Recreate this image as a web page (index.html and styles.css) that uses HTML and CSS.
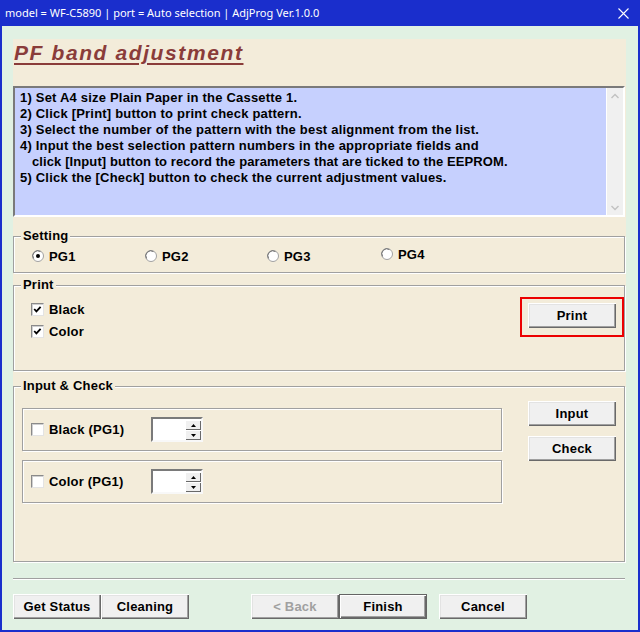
FILE: index.html
```html
<!DOCTYPE html>
<html lang="en">
<head>
<meta charset="utf-8">
<title>PF band adjustment</title>
<link rel="stylesheet" href="styles.css">
</head>
<body>
<div class="window">
  <div class="titlebar">
    <span class="title">model = WF-C5890 | port = Auto selection | AdjProg Ver.1.0.0</span>
    <svg class="close" width="11" height="11" viewBox="0 0 11 11"><path d="M0.5 0.5 L10.5 10.5 M10.5 0.5 L0.5 10.5" stroke="#fff" stroke-width="1.1" fill="none"/></svg>
  </div>
  <div class="client">
    <div class="panel">
      <h1 class="heading">PF band adjustment</h1>
      <div class="textbox">
        <div class="instructions"><div>1) Set A4 size Plain Paper in the Cassette 1.</div><div>2) Click [Print] button to print check pattern.</div><div>3) Select the number of the pattern with the best alignment from the list.</div><div>4) Input the best selection pattern numbers in the appropriate fields and</div><div class="indent">click [Input] button to record the parameters that are ticked to the EEPROM.</div><div>5) Click the [Check] button to check the current adjustment values.</div></div>
        <div class="vscroll">
          <svg width="8" height="6" viewBox="0 0 8 6"><path d="M0.5 5 L4 1.5 L7.5 5" stroke="#c2c2c2" stroke-width="1.4" fill="none"/></svg>
          <svg width="8" height="6" viewBox="0 0 8 6"><path d="M0.5 1 L4 4.5 L7.5 1" stroke="#c2c2c2" stroke-width="1.4" fill="none"/></svg>
        </div>
      </div>

      <fieldset class="group setting">
        <legend>Setting</legend>
        <div class="radios">
          <label class="radio r1"><svg width="12" height="12" viewBox="0 0 12 12"><circle cx="6" cy="6" r="5.5" fill="#fff" stroke="#a0a0a0"/><path d="M1.6 8.5 A5 5 0 0 1 8.5 1.6" stroke="#707070" fill="none"/><circle cx="6" cy="6" r="2" fill="#000"/></svg>PG1</label>
          <label class="radio r2"><svg width="12" height="12" viewBox="0 0 12 12"><circle cx="6" cy="6" r="5.5" fill="#fff" stroke="#a0a0a0"/><path d="M1.6 8.5 A5 5 0 0 1 8.5 1.6" stroke="#707070" fill="none"/></svg>PG2</label>
          <label class="radio r3"><svg width="12" height="12" viewBox="0 0 12 12"><circle cx="6" cy="6" r="5.5" fill="#fff" stroke="#a0a0a0"/><path d="M1.6 8.5 A5 5 0 0 1 8.5 1.6" stroke="#707070" fill="none"/></svg>PG3</label>
          <label class="radio r4"><svg width="12" height="12" viewBox="0 0 12 12"><circle cx="6" cy="6" r="5.5" fill="#fff" stroke="#a0a0a0"/><path d="M1.6 8.5 A5 5 0 0 1 8.5 1.6" stroke="#707070" fill="none"/></svg>PG4</label>
        </div>
      </fieldset>

      <fieldset class="group print">
        <legend>Print</legend>
        <div class="print-body">
          <div class="checks">
            <label class="check"><span class="cb"><svg width="11" height="11" viewBox="0 0 11 11"><path d="M2.2 5 L4.4 7.4 L8.6 2.8" stroke="#000" stroke-width="1.8" fill="none"/></svg></span>Black</label>
            <label class="check"><span class="cb"><svg width="11" height="11" viewBox="0 0 11 11"><path d="M2.2 5 L4.4 7.4 L8.6 2.8" stroke="#000" stroke-width="1.8" fill="none"/></svg></span>Color</label>
          </div>
          <div class="highlight"><button class="btn">Print</button></div>
        </div>
      </fieldset>

      <fieldset class="group input">
        <legend>Input &amp; Check</legend>
        <div class="input-body">
          <div class="rows">
            <div class="etched">
              <label class="check wide"><span class="cb"></span>Black (PG1)</label>
              <div class="spin"><div class="spin-field"></div><div class="spin-btns"><span class="spin-btn"><svg width="5" height="3" viewBox="0 0 5 3"><path d="M2.5 0 L5 3 L0 3 Z" fill="#000"/></svg></span><span class="spin-btn"><svg width="5" height="3" viewBox="0 0 5 3"><path d="M0 0 L5 0 L2.5 3 Z" fill="#000"/></svg></span></div></div>
            </div>
            <div class="etched">
              <label class="check wide"><span class="cb"></span>Color (PG1)</label>
              <div class="spin"><div class="spin-field"></div><div class="spin-btns"><span class="spin-btn"><svg width="5" height="3" viewBox="0 0 5 3"><path d="M2.5 0 L5 3 L0 3 Z" fill="#000"/></svg></span><span class="spin-btn"><svg width="5" height="3" viewBox="0 0 5 3"><path d="M0 0 L5 0 L2.5 3 Z" fill="#000"/></svg></span></div></div>
            </div>
          </div>
          <div class="side-btns">
            <button class="btn">Input</button>
            <button class="btn">Check</button>
          </div>
        </div>
      </fieldset>
    </div>
    <div class="separator"></div>
    <div class="footer">
      <button class="btn">Get Status</button>
      <button class="btn">Cleaning</button>
      <button class="btn back" disabled>&lt; Back</button>
      <button class="btn default">Finish</button>
      <button class="btn cancel">Cancel</button>
    </div>
  </div>
</div>
</body>
</html>
```

FILE: styles.css
```css
* { box-sizing: border-box; }

html, body {
  margin: 0;
  padding: 0;
}

body {
  width: 640px;
  height: 632px;
  font-family: "Liberation Sans", Arial, sans-serif;
  color: #000;
}

.window {
  width: 640px;
  height: 632px;
  background: #1a2ecc;
  padding: 0 2px 2px 2px;
  display: flex;
  flex-direction: column;
}

.titlebar {
  height: 26px;
  flex: none;
  display: flex;
  align-items: center;
  justify-content: space-between;
  padding: 0 9px 0 3px;
  color: #fff;
}

.title {
  font-family: "Noto Sans", "Open Sans", sans-serif;
  font-size: 11px;
  line-height: 16px;
}

.close { display: block; }

.client {
  flex: 1;
  background: #e1f1e3;
  padding: 13px 12px 0 11px;
}

.panel {
  background: #f3ecda;
  height: 524px;
  padding-right: 1px;
}

.heading {
  margin: 0;
  height: 47px;
  padding: 2px 0 0 1px;
  font-family: "Liberation Sans", Arial, sans-serif;
  font-size: 21px;
  line-height: 24px;
  letter-spacing: 1.6px;
  font-style: italic;
  font-weight: bold;
  color: #8a3c3a;
  text-decoration: underline;
  text-decoration-thickness: 2px;
  text-underline-offset: 3px;
}

.textbox {
  height: 131px;
  display: flex;
  border: 2px solid;
  border-color: #7a7a7a #ffffff #ffffff #7a7a7a;
  background: #c6d0fe;
}

.instructions {
  flex: 1;
  padding: 2px 0 0 5px;
  font-size: 13px;
  line-height: 16px;
  font-weight: bold;
  letter-spacing: 0.2px;
  white-space: pre;
}

.instructions .indent { padding-left: 12px; letter-spacing: 0.1px; }

.vscroll {
  width: 17px;
  flex: none;
  background: #f0f0f0;
  border-left: 1px solid #fff;
  display: flex;
  flex-direction: column;
  justify-content: space-between;
  align-items: center;
  padding: 5px 0 4px;
}

.vscroll svg { display: block; }

.group {
  margin: 0;
  padding: 0;
  min-width: 0;
  border: 1px solid #a0a0a0;
  box-shadow: inset 1px 1px #fff, 1px 1px #fff;
}

.group legend {
  margin-left: 7px;
  padding: 0 2px;
  font-size: 13px;
  line-height: 16px;
  font-weight: bold;
  letter-spacing: 0.2px;
  background: #f3ecda;
}

.setting { margin-top: 11px; }
.print { margin-top: 4px; }
.input { margin-top: 7px; }

.radios {
  display: flex;
  align-items: center;
  padding: 4px 0 8px 18px;
  height: 28px;
  font-size: 13px;
  font-weight: bold;
  letter-spacing: 0.2px;
}

.radio {
  display: flex;
  align-items: center;
  gap: 5px;
}

.radio svg { display: block; flex: none; }

.r1 { width: 113px; }
.r2 { width: 122px; }
.r3 { width: 114px; }
.r4 { margin-bottom: 4px; }

.print-body {
  height: 77px;
  display: flex;
  justify-content: space-between;
  align-items: flex-start;
}

.checks {
  padding: 5px 0 0 17px;
}

.check {
  display: flex;
  align-items: center;
  gap: 5px;
  height: 22px;
  font-size: 13px;
  font-weight: bold;
  letter-spacing: 0.2px;
}

.cb {
  width: 13px;
  height: 13px;
  flex: none;
  background: #fff;
  border: 1px solid;
  border-color: #8a8a8a #e3e3e3 #e3e3e3 #8a8a8a;
  box-shadow: inset 1px 1px #d0d0d0;
  display: flex;
  align-items: center;
  justify-content: center;
}

.cb svg { display: block; }

.highlight {
  margin-top: 4px;
  border: 2px solid #ec0000;
  padding: 4px 6px 7px 6px;
}

.btn {
  display: block;
  width: 88px;
  height: 25px;
  padding: 0;
  border: none;
  background: #f0f0f0;
  box-shadow: inset 1px 1px #ffffff, inset -1px -1px #696969, inset -2px -2px #a0a0a0, inset 2px 2px #e3e3e3;
  font-family: "Liberation Sans", Arial, sans-serif;
  font-size: 13px;
  font-weight: bold;
  letter-spacing: 0.2px;
  color: #000;
}

.input-body {
  height: 167px;
  display: flex;
  align-items: flex-start;
}

.rows {
  margin: 14px 0 0 8px;
  width: 480px;
  display: flex;
  flex-direction: column;
  gap: 9px;
}

.etched {
  height: 43px;
  display: flex;
  align-items: center;
  padding-left: 8px;
  border: 1px solid #a0a0a0;
  box-shadow: inset 1px 1px #fff, 1px 1px #fff;
}

.check.wide { width: 120px; }

.spin {
  width: 52px;
  height: 25px;
  display: flex;
  border: 2px solid;
  border-color: #7a7a7a #f8f8f8 #f8f8f8 #7a7a7a;
  background: #fff;
}

.spin-field { flex: 1; }

.spin-btns {
  width: 16px;
  display: flex;
  flex-direction: column;
  padding: 1px 0 0;
}

.spin-btn {
  flex: 1;
  display: flex;
  align-items: center;
  justify-content: center;
  background: #f0f0f0;
  box-shadow: inset 1px 1px #fff, inset -1px -1px #696969;
}

.spin-btn svg { display: block; }

.side-btns {
  margin: 7px 8px 0 auto;
  display: flex;
  flex-direction: column;
  gap: 10px;
}

.separator {
  margin: 15px 1px 0 0;
  height: 2px;
  border-top: 1px solid #a0a0a0;
  border-bottom: 1px solid #fff;
}

.footer {
  margin-top: 14px;
  display: flex;
}

.back {
  margin-left: 62px;
  color: #a0a0a0;
}

.default {
  box-shadow: inset 0 0 0 1px #646464, inset 2px 2px #ffffff, inset -2px -2px #696969, inset -3px -3px #a0a0a0;
}

.cancel { margin-left: 12px; }
```
